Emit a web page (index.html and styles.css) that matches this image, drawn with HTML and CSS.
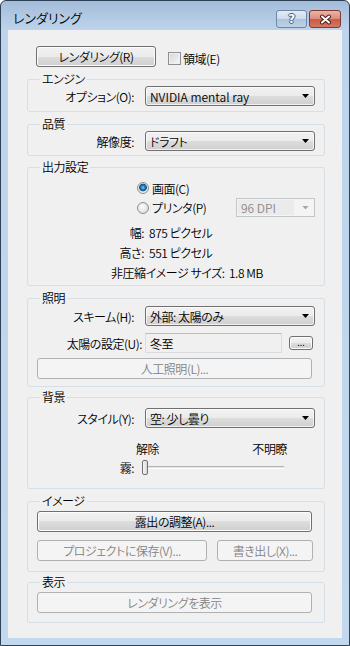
FILE: index.html
```html
<!DOCTYPE html>
<html lang="ja">
<head>
  <meta charset="UTF-8">
  <meta name="viewport" content="width=device-width, initial-scale=1.0">
  <title>レンダリング</title>
  <link rel="stylesheet" href="styles.css">
</head>
<body>
  <div class="window">
    <!-- Title bar -->
    <div class="titlebar">
      <span class="titlebar__text">レンダリング</span>
      <div class="titlebar__controls">
        <span class="titlebar__btn titlebar__btn--help">?</span>
        <span class="titlebar__btn titlebar__btn--close">
          <svg width="13" height="11" viewBox="0 0 13 11">
            <path d="M3 2.5 L10 8.5 M10 2.5 L3 8.5" stroke="#4a1c15" stroke-width="4" stroke-linecap="round" fill="none"/>
            <path d="M3 2.5 L10 8.5 M10 2.5 L3 8.5" stroke="#fff" stroke-width="2" stroke-linecap="round" fill="none"/>
          </svg>
        </span>
      </div>
    </div>

    <div class="dialog">
      <div class="dialog__top">
        <div class="btn btn--render">レンダリング(R)</div>
        <label class="check"><span class="check__box"></span>領域(E)</label>
      </div>

      <!-- Engine -->
      <fieldset class="group group--engine">
        <legend class="group__title">エンジン</legend>
        <div class="field">
          <span class="field__label">オプション(O):</span>
          <div class="combo combo--latin">NVIDIA mental ray<span class="combo__arrow"></span></div>
        </div>
      </fieldset>

      <!-- Quality -->
      <fieldset class="group group--quality">
        <legend class="group__title">品質</legend>
        <div class="field">
          <span class="field__label">解像度:</span>
          <div class="combo">ドラフト<span class="combo__arrow"></span></div>
        </div>
      </fieldset>

      <!-- Output -->
      <fieldset class="group group--output">
        <legend class="group__title">出力設定</legend>
        <div class="radio-row">
          <span class="radio-option"><span class="radio radio--checked"></span>画面(C)</span>
        </div>
        <div class="radio-row radio-row--printer">
          <span class="radio-option"><span class="radio"></span>プリンタ(P)</span>
          <div class="combo combo--disabled"><span class="combo__value">96 DPI</span><span class="combo__arrow"></span></div>
        </div>
        <div class="info">
          <div class="info-row"><span class="info-row__label">幅:</span><span class="info-row__value">875 ピクセル</span></div>
          <div class="info-row"><span class="info-row__label">高さ:</span><span class="info-row__value">551 ピクセル</span></div>
          <div class="info-row">非圧縮イメージ サイズ:&nbsp; 1.8 MB</div>
        </div>
      </fieldset>

      <!-- Lighting -->
      <fieldset class="group group--light">
        <legend class="group__title">照明</legend>
        <div class="field">
          <span class="field__label">スキーム(H):</span>
          <div class="combo">外部: 太陽のみ<span class="combo__arrow"></span></div>
        </div>
        <div class="field">
          <span class="field__label field__label--wide">太陽の設定(U):</span>
          <div class="sun">
            <div class="textbox">冬至</div>
            <div class="btn btn--small">...</div>
          </div>
        </div>
        <div class="btn btn--full btn--disabled">人工照明(L)...</div>
      </fieldset>

      <!-- Background -->
      <fieldset class="group group--background">
        <legend class="group__title">背景</legend>
        <div class="field">
          <span class="field__label">スタイル(Y):</span>
          <div class="combo">空: 少し曇り<span class="combo__arrow"></span></div>
        </div>
        <div class="scale">
          <span>解除</span>
          <span>不明瞭</span>
        </div>
        <div class="slider">
          <span class="field__label">霧:</span>
          <div class="slider__control">
            <span class="slider__thumb"></span>
            <span class="slider__track"></span>
          </div>
        </div>
      </fieldset>

      <!-- Image -->
      <fieldset class="group group--image">
        <legend class="group__title">イメージ</legend>
        <div class="btn btn--full">露出の調整(A)...</div>
        <div class="btn-row">
          <div class="btn btn--disabled btn--project">プロジェクトに保存(V)...</div>
          <div class="btn btn--disabled btn--export">書き出し(X)...</div>
        </div>
      </fieldset>

      <!-- Display -->
      <fieldset class="group group--display">
        <legend class="group__title">表示</legend>
        <div class="btn btn--full btn--disabled">レンダリングを表示</div>
      </fieldset>
    </div>
  </div>
</body>
</html>
```

FILE: styles.css
```css
/* Reset */
*, *::after, *::before {
  margin: 0;
  padding: 0;
  box-sizing: border-box;
}

body {
  width: 350px;
  height: 646px;
  overflow: hidden;
  background-color: #fff;
  font-family: "Noto Sans CJK JP", "Noto Sans", sans-serif;
  font-size: 12px;
  font-weight: 350;
  font-feature-settings: "palt";
  letter-spacing: -0.45px;
  color: #000;
}

/* Window frame */
.window {
  width: 350px;
  height: 646px;
  border: 1px solid #2f4155;
  border-radius: 6px 6px 0 0;
  background: linear-gradient(#a3bcd9, #bed4ec 29px, #c2d8ef);
  display: flex;
  flex-direction: column;
}

.titlebar {
  height: 29px;
  display: flex;
  justify-content: space-between;
  padding: 0 8px 0 12px;
}

.titlebar__text {
  font-size: 13px;
  line-height: 14px;
  letter-spacing: 0;
  margin-top: 10px;
}

.titlebar__controls {
  display: flex;
  gap: 2px;
  margin-top: 9px;
}

.titlebar__btn {
  height: 18px;
  border-radius: 3px;
  display: flex;
  align-items: center;
  justify-content: center;
}

.titlebar__btn--help {
  width: 31px;
  border: 1px solid #6f86a4;
  background: linear-gradient(#e4edf7, #cbdaeb 50%, #aec4de 50%, #bdd1e8);
  color: #fff;
  font-family: "DejaVu Sans", sans-serif;
  font-weight: bold;
  font-size: 12px;
  line-height: 12px;
  text-shadow: 1px 0 #445a74, -1px 0 #445a74, 0 1px #445a74, 0 -1px #445a74;
}

.titlebar__btn--close {
  width: 32px;
  border: 1px solid #7c3b33;
  background: linear-gradient(#ebb4a8, #db8c7a 50%, #c75a45 50%, #d6765f);
}

/* Client area */
.dialog {
  height: 608px;
  margin: 0 7px;
  padding: 16px 17px 0 19px;
  background-color: #f0f0f0;
  display: flex;
  flex-direction: column;
}

.dialog__top {
  display: flex;
  align-items: center;
  height: 21px;
  padding-left: 9px;
}

.check {
  display: flex;
  align-items: center;
  gap: 2px;
  margin-left: 12px;
  margin-top: 3px;
}

.check__box {
  width: 13px;
  height: 13px;
  border: 1px solid #8e8f8f;
  background: linear-gradient(135deg, #d2d5da, #f8f8f8);
  box-shadow: inset 0 0 0 1px #eef0f2;
}

/* Buttons */
.btn {
  height: 21px;
  border: 1px solid #707070;
  border-radius: 3px;
  background: linear-gradient(#f2f2f2, #ebebeb 50%, #dddddd 50%, #cfcfcf);
  box-shadow: inset 0 0 0 1px #fcfcfc;
  display: flex;
  align-items: center;
  justify-content: center;
  white-space: nowrap;
}

.btn--render {
  width: 120px;
}

.btn--full {
  margin-right: 3px;
}

.btn--disabled {
  border-color: #adb2b5;
  background: #f4f4f4;
  box-shadow: none;
  color: #838383;
}

.btn--small {
  width: 24px;
  height: 14px;
  margin-left: 7px;
  font-size: 9px;
  line-height: 9px;
  letter-spacing: 0;
  align-items: flex-end;
  padding-bottom: 2px;
}

.btn-row {
  display: flex;
  gap: 10px;
  margin-top: 8px;
}

.btn--project {
  width: 170px;
}

.btn--export {
  width: 96px;
}

/* Group boxes */
.group {
  border: 1px solid #d5dfe5;
  border-radius: 3px;
  padding: 0 9px;
  min-width: 0;
}

.group__title {
  font-size: 12px;
  line-height: 12px;
  padding: 0 2px;
  margin-left: 3px;
}

.group--engine {
  margin-top: 6px;
  padding-top: 1px;
  padding-bottom: 5px;
}

.group--quality {
  margin-top: 6px;
  padding-top: 1px;
  padding-bottom: 4px;
}

.group--output {
  margin-top: 5px;
  padding-top: 6px;
  padding-bottom: 3px;
}

.group--light {
  margin-top: 6px;
  padding-top: 2px;
  padding-bottom: 7px;
}

.group--background {
  margin-top: 4px;
  padding-top: 5px;
  padding-bottom: 12px;
}

.group--image {
  margin-top: 6px;
  padding-top: 4px;
  padding-bottom: 10px;
}

.group--display {
  margin-top: 4px;
  padding-top: 4px;
  padding-bottom: 9px;
}

/* Label + control rows */
.field {
  display: grid;
  grid-template-columns: 97px 1fr;
  column-gap: 11px;
  align-items: center;
  height: 20px;
}

.field + .field {
  margin-top: 7px;
}

.field__label {
  text-align: right;
  white-space: nowrap;
}

.field__label--wide {
  margin-right: -8px;
}

.group--light .btn--full {
  margin-top: 5px;
}

/* Drop-down lists */
.combo {
  height: 20px;
  border: 1px solid #707070;
  border-radius: 3px;
  background: linear-gradient(#f2f2f2, #ebebeb 50%, #dddddd 50%, #cfcfcf);
  box-shadow: inset 0 0 0 1px rgba(255, 255, 255, 0.7);
  display: flex;
  align-items: center;
  justify-content: space-between;
  padding: 0 5px 0 4px;
  white-space: pre;
}

.combo--latin {
  letter-spacing: 0;
}

.combo__arrow {
  width: 7px;
  height: 4px;
  background-color: #000;
  clip-path: polygon(0 0, 100% 0, 50% 100%);
}

.combo--disabled {
  width: 79px;
  height: 19px;
  border-color: #c3c7ca;
  border-radius: 0;
  background: #f4f4f4;
  box-shadow: none;
  padding: 1px 5px 1px 1px;
  color: #8a8a8a;
  letter-spacing: 0;
}

.combo--disabled .combo__value {
  flex: 1;
  align-self: stretch;
  display: flex;
  align-items: center;
  padding-left: 3px;
  margin-right: 8px;
  background-color: #ebebeb;
}

.combo--disabled .combo__arrow {
  background-color: #a6a6a6;
}

/* Output settings */
.radio-row {
  display: flex;
  align-items: center;
  height: 18px;
  padding-left: 100px;
}

.radio-row--printer {
  height: 19px;
  margin-top: 1px;
  justify-content: space-between;
}

.radio-option {
  display: flex;
  align-items: center;
  gap: 3px;
}

.radio {
  width: 12px;
  height: 12px;
  border-radius: 50%;
  border: 1px solid #8c8e90;
  background: radial-gradient(circle at 40% 40%, #ffffff, #d6d8da 85%);
}

.radio--checked {
  background: radial-gradient(circle at 50% 45%, #8fdcfa 0, #2f8cca 1.5px, #174f80 3.5px, #e4e6e8 4.2px, #f7f7f7 100%);
}

.info {
  margin-top: 5px;
}

.info-row {
  display: flex;
  align-items: center;
  height: 20px;
  padding-left: 74px;
  white-space: pre;
}

.info-row__label {
  width: 33px;
  text-align: right;
}

.info-row__value {
  margin-left: 5px;
}

/* Lighting */
.sun {
  display: flex;
  align-items: center;
}

.textbox {
  width: 137px;
  height: 20px;
  border: 1px solid #dadcdf;
  border-top-color: #b9bcc1;
  background-color: #f0f0f0;
  padding-left: 4px;
  display: flex;
  align-items: center;
}

/* Background */
.scale {
  display: flex;
  justify-content: space-between;
  height: 14px;
  line-height: 14px;
  margin-top: 14px;
  padding: 0 28px 0 99px;
}

.slider {
  display: grid;
  grid-template-columns: 97px 1fr;
  column-gap: 8px;
  align-items: center;
  height: 17px;
  margin-top: 3px;
}

.slider__control {
  display: flex;
  align-items: center;
  width: 142px;
}

.slider__thumb {
  width: 6px;
  height: 15px;
  border: 1px solid #707070;
  border-radius: 2px;
  background: linear-gradient(90deg, #f6f6f6, #d8d8d8);
}

.slider__track {
  flex: 1;
  height: 3px;
  border-top: 1px solid #b4b4b4;
  border-bottom: 1px solid #fff;
  background-color: #e2e2e2;
}
```
